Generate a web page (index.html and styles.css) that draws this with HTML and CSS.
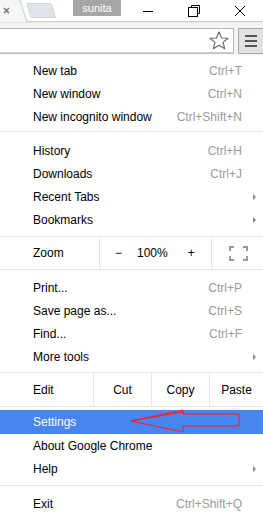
FILE: index.html
```html
<!DOCTYPE html>
<html lang="en">

<head>
    <meta charset="UTF-8">
    <meta name="viewport" content="width=device-width, initial-scale=1.0">
    <title>Chrome menu</title>
    <link rel="stylesheet" href="styles.css">
</head>

<body>

    <!-- title bar -->
    <div class="titlebar">
        <svg class="tabs" width="60" height="22" viewBox="0 0 60 22">
            <path d="M0 0 H20 L27 22 H0 Z" fill="#f6f6f6" />
            <path d="M20 0 L27 22" stroke="#c9c9c9" fill="none" />
            <path d="M4 8 L9 13 M9 8 L4 13" stroke="#777" stroke-width="1.5" />
            <path d="M27 3.5 H49 Q51 3.5 52 5.5 L55.5 17.5 H33 Q31 17.5 30.5 16 Z" fill="#dfe4ea" stroke="#cfd5dc" />
        </svg>
        <div class="user">sunita</div>
        <div class="controls">
            <div class="ctl">
                <svg width="12" height="12" viewBox="0 0 12 12"><path d="M1 6.5 H11" stroke="#000" /></svg>
            </div>
            <div class="ctl">
                <svg width="12" height="12" viewBox="0 0 12 12">
                    <path d="M3.5 2.5 V0.5 H11.5 V8.5 H9.5" stroke="#000" fill="none" />
                    <rect x="0.5" y="2.5" width="9" height="9" stroke="#000" fill="none" />
                </svg>
            </div>
            <div class="ctl">
                <svg width="12" height="12" viewBox="0 0 12 12"><path d="M1 1 L11 11 M11 1 L1 11" stroke="#000" /></svg>
            </div>
        </div>
    </div>

    <!-- toolbar -->
    <div class="toolbar">
        <div class="omnibox">
            <svg class="star" width="20" height="19" viewBox="0 0 20 19">
                <polygon points="10,1 12.6,7 19,7.3 14,11.4 15.7,17.8 10,14.2 4.3,17.8 6,11.4 1,7.3 7.4,7" fill="none" stroke="#666" stroke-width="1.1" stroke-linejoin="round" />
            </svg>
        </div>
        <div class="menu_btn">
            <span></span><span></span><span></span>
        </div>
    </div>

    <!-- menu -->
    <div class="menu">
        <div class="item"><span>New tab</span><span class="key">Ctrl+T</span></div>
        <div class="item"><span>New window</span><span class="key">Ctrl+N</span></div>
        <div class="item"><span>New incognito window</span><span class="key">Ctrl+Shift+N</span></div>
        <div class="sep first"></div>
        <div class="item"><span>History</span><span class="key">Ctrl+H</span></div>
        <div class="item"><span>Downloads</span><span class="key">Ctrl+J</span></div>
        <div class="item"><span>Recent Tabs</span><span class="arrow"></span></div>
        <div class="item"><span>Bookmarks</span><span class="arrow"></span></div>

        <!-- zoom row -->
        <div class="row zoom_row">
            <div class="cell label">Zoom</div>
            <div class="cell zoom_ctl">
                <span>&minus;</span>
                <span class="pct">100%</span>
                <span>+</span>
            </div>
            <div class="cell full">
                <svg width="19" height="15" viewBox="0 0 19 15">
                    <path d="M1 5 V1 H5 M14 1 H18 V5 M18 10 V14 H14 M5 14 H1 V10" stroke="#999" stroke-width="2" fill="none" />
                </svg>
            </div>
        </div>

        <div class="item"><span>Print...</span><span class="key">Ctrl+P</span></div>
        <div class="item"><span>Save page as...</span><span class="key">Ctrl+S</span></div>
        <div class="item"><span>Find...</span><span class="key">Ctrl+F</span></div>
        <div class="item"><span>More tools</span><span class="arrow"></span></div>

        <!-- edit row -->
        <div class="row edit_row">
            <div class="cell label">Edit</div>
            <div class="cell btn cut">Cut</div>
            <div class="cell btn copy">Copy</div>
            <div class="cell btn paste">Paste</div>
        </div>

        <div class="item active">
            <span>Settings</span>
            <svg class="pointer" width="112" height="26" viewBox="0 0 112 26">
                <polygon points="1,12 53,1 53,5 109,5 109,17 53,17 53,23" fill="none" stroke="#ff1a1a" stroke-width="1" />
                <polyline points="1,12 53,3 M1,12 53,21" fill="none" stroke="#ff1a1a" stroke-width="1" />
            </svg>
        </div>
        <div class="item"><span>About Google Chrome</span></div>
        <div class="item"><span>Help</span><span class="arrow"></span></div>
        <div class="sep last"></div>
        <div class="item"><span>Exit</span><span class="key">Ctrl+Shift+Q</span></div>
    </div>

</body>

</html>
```

FILE: styles.css
```css
* {
    margin: 0;
    padding: 0;
    box-sizing: border-box;
}

body {
    width: 263px;
    height: 516px;
    overflow: hidden;
    background: #ffffff;
    font-family: "Liberation Sans", Arial, sans-serif;
    font-size: 12px;
    color: #000000;
}

/* title bar */
.titlebar {
    height: 22px;
    display: flex;
    align-items: flex-start;
    border-bottom: 1px solid #cfcfcf;
}

.titlebar .tabs {
    display: block;
}

.titlebar .user {
    width: 48px;
    height: 16px;
    margin-left: 13px;
    background: #a6a6a6;
    color: #ffffff;
    font-size: 11px;
    line-height: 16px;
    text-align: center;
}

.titlebar .controls {
    margin-left: auto;
    display: flex;
    height: 21px;
}

.titlebar .ctl {
    width: 46px;
    display: flex;
    align-items: center;
    justify-content: center;
}

.titlebar .ctl svg {
    display: block;
}

/* toolbar */
.toolbar {
    height: 33px;
    display: flex;
    align-items: flex-start;
    padding-top: 5px;
    background: #f4f4f4;
    border-top: 1px solid #e6e6e6;
}

.toolbar .omnibox {
    flex: 1;
    height: 26px;
    background: #ffffff;
    border: 1px solid #b8b8b8;
    border-left: none;
    border-bottom: 2px solid #c8c8c8;
    display: flex;
    align-items: center;
    justify-content: flex-end;
    padding-right: 4px;
}

.toolbar .star {
    display: block;
}

.toolbar .menu_btn {
    width: 25px;
    height: 26px;
    margin-left: 4px;
    background: #e2e2e2;
    border: 1px solid #a6a6a6;
    border-right: none;
    display: flex;
    flex-direction: column;
    justify-content: center;
    gap: 3px;
    padding-left: 6px;
}

.toolbar .menu_btn span {
    display: block;
    width: 12px;
    height: 2px;
    background: #555555;
}

/* menu */
.menu {
    padding-top: 4px;
}

.item {
    height: 23px;
    display: flex;
    align-items: center;
    justify-content: space-between;
    padding: 0 21px 0 33px;
    position: relative;
}

.item .key {
    color: #9a9a9a;
}

.item .arrow {
    width: 0;
    height: 0;
    border-top: 3px solid transparent;
    border-bottom: 3px solid transparent;
    border-left: 3px solid #888888;
    margin-right: -14px;
}

.item.active {
    height: 24px;
    background: #4785ef;
    color: #ffffff;
}

.item .pointer {
    position: absolute;
    left: 130px;
    top: -1px;
}

.sep {
    height: 1px;
    background: #e6e6e6;
}

.sep.first {
    margin: 3px 0 7px;
}

.sep.last {
    margin: 5px 0 6px;
}

.row {
    display: flex;
    border-top: 1px solid #e6e6e6;
    border-bottom: 1px solid #e6e6e6;
}

.row .cell {
    display: flex;
    align-items: center;
}

.row .label {
    padding-left: 33px;
}

.zoom_row {
    height: 34px;
    margin: 5px 0 6px;
}

.zoom_row .label {
    width: 100px;
    border-right: 1px solid #e6e6e6;
}

.zoom_row .zoom_ctl {
    width: 112px;
    border-right: 1px solid #e6e6e6;
    padding-left: 15px;
}

.zoom_row .zoom_ctl span {
    display: block;
}

.zoom_row .pct {
    margin: 0 20px 0 15px;
}

.zoom_row .full {
    flex: 1;
    justify-content: center;
    padding-left: 2px;
}

.edit_row {
    height: 35px;
    margin: 4px 0 3px;
}

.edit_row .label {
    width: 94px;
    border-right: 1px solid #e6e6e6;
}

.edit_row .btn {
    justify-content: center;
}

.edit_row .cut {
    width: 58px;
    border-right: 1px solid #e6e6e6;
}

.edit_row .copy {
    width: 58px;
    border-right: 1px solid #e6e6e6;
}

.edit_row .paste {
    flex: 1;
}
```
